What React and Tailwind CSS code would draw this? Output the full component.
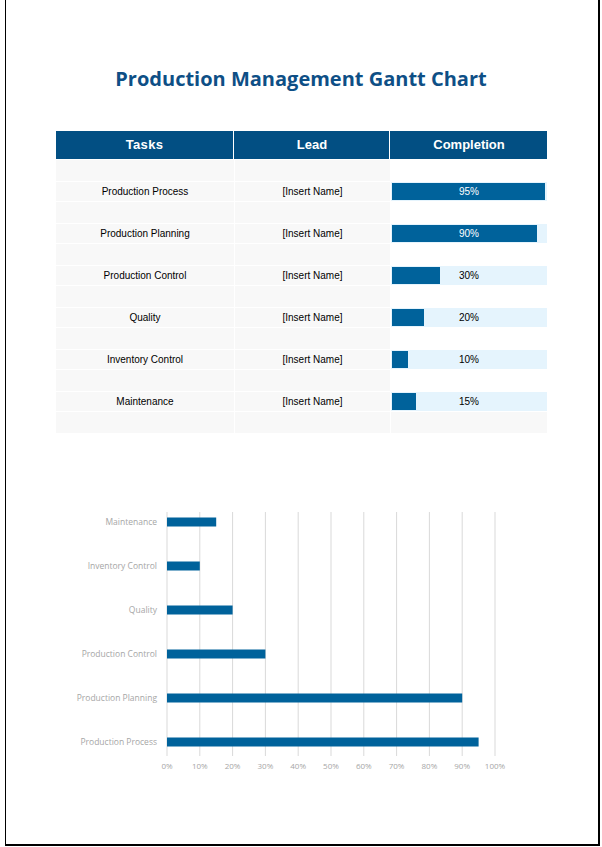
import React from "react";

const rows = [
  ["Production Process", 95],
  ["Production Planning", 90],
  ["Production Control", 30],
  ["Quality", 20],
  ["Inventory Control", 10],
  ["Maintenance", 15],
];

function Spacer({ last }) {
  return (
    <div className="flex h-[21px] gap-[1px]">
      <div className="w-[178px] bg-[#f8f8f8]" />
      <div className="w-[155px] bg-[#f8f8f8]" />
      <div className={"w-[156px] " + (last ? "bg-[#f8f8f8]" : "bg-white")} />
    </div>
  );
}

export default function App() {
  const x0 = 167, sc = 3.28;
  const ys = [742, 698, 654, 610, 566, 522];
  return (
    <div className="w-[602px] h-[847px] bg-white relative" style={{ fontFamily: '"Liberation Sans", Arial, sans-serif' }}>
      <div className="absolute left-[5px] top-0 w-[595px] h-[846px] border-l border-r-2 border-b-2 border-black pointer-events-none" />
      <div className="pt-[64px] text-center text-[20px] font-bold text-[#0e4f86] leading-[30px]" style={{ fontFamily: '"Open Sans", sans-serif' }}>
        Production Management Gantt Chart
      </div>
      <div className="ml-[56px] mt-[37px] w-[491px]">
        <div className="flex h-[28px] gap-[1px] bg-[#024f83] text-white font-bold text-[13px]">
          <div className="w-[178px] flex items-center justify-center tracking-wide border-r border-white">Tasks</div>
          <div className="w-[155px] flex items-center justify-center border-r border-white">Lead</div>
          <div className="flex-1 flex items-center justify-center">Completion</div>
        </div>
        <div className="flex flex-col gap-[0px] mt-[1px] text-[10px] text-black">
          {rows.map(([n, p]) => (
            <React.Fragment key={n}>
              <Spacer />
              <div className="flex h-[21px] gap-[1px] border-y border-white">
                <div className="w-[178px] bg-[#f8f8f8] flex items-center justify-center">{n}</div>
                <div className="w-[155px] bg-[#f8f8f8] flex items-center justify-center">[Insert Name]</div>
                <div className="w-[156px] bg-[#e5f4fd] relative flex items-center pl-[1px]">
                  <div className="h-[17px] bg-[#00629b]" style={{ width: p * 1.61 + "px" }} />
                  <div className={"absolute inset-0 flex items-center justify-center " + (p > 50 ? "text-white" : "text-black")}>{p}%</div>
                </div>
              </div>
            </React.Fragment>
          ))}
          <Spacer last />
        </div>
      </div>
      <svg className="absolute left-0 top-0" width="602" height="847" style={{ fontFamily: '"Open Sans", sans-serif' }}>
        {Array.from({ length: 11 }, (_, i) => (
          <g key={i}>
            <line x1={x0 + i * 32.8} x2={x0 + i * 32.8} y1="512" y2="756" stroke="#d9d9d9" strokeWidth="1" />
            <text x={x0 + i * 32.8} y="769" fontSize="8" fill="#a6a6a6" textAnchor="middle">{i * 10}%</text>
          </g>
        ))}
        {rows.map(([n, p], i) => (
          <g key={n}>
            <rect x={x0} y={ys[i] - 4.5} width={p * sc} height="9" fill="#00629b" />
            <text x="157" y={ys[i] + 3} fontSize="8.5" fill="#a6a6a6" textAnchor="end">{n}</text>
          </g>
        ))}
      </svg>
    </div>
  );
}
